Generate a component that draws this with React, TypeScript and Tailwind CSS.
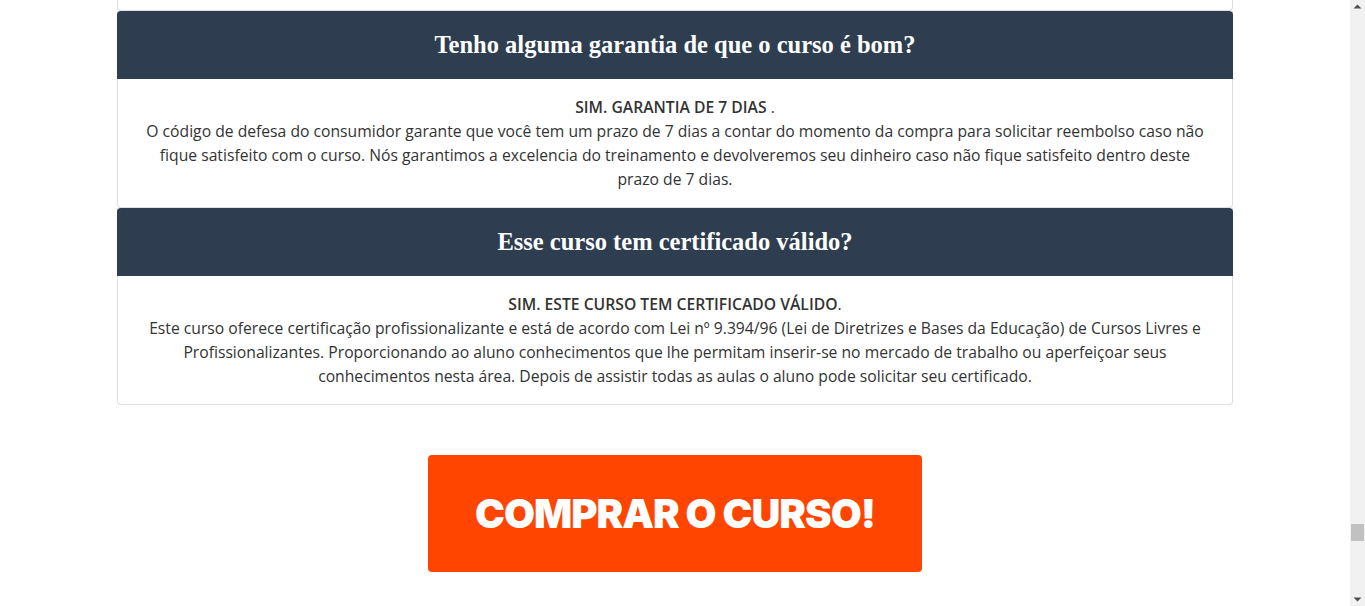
const cards = [
  {
    title: "Tenho alguma garantia de que o curso é bom?",
    lead: "SIM. GARANTIA DE 7 DIAS",
    leadTail: " .",
    text: "O código de defesa do consumidor garante que você tem um prazo de 7 dias a contar do momento da compra para solicitar reembolso caso não fique satisfeito com o curso. Nós garantimos a excelencia do treinamento e devolveremos seu dinheiro caso não fique satisfeito dentro deste prazo de 7 dias.",
  },
  {
    title: "Esse curso tem certificado válido?",
    lead: "SIM. ESTE CURSO TEM CERTIFICADO VÁLIDO",
    leadTail: ".",
    text: "Este curso oferece certificação profissionalizante e está de acordo com Lei nº 9.394/96 (Lei de Diretrizes e Bases da Educação) de Cursos Livres e Profissionalizantes. Proporcionando ao aluno conhecimentos que lhe permitam inserir-se no mercado de trabalho ou aperfeiçoar seus conhecimentos nesta área. Depois de assistir todas as aulas o aluno pode solicitar seu certificado.",
  },
];

function FaqCard({ title, lead, leadTail, text }: (typeof cards)[number]) {
  return (
    <div className="border-x border-b border-[#dedede] rounded-b">
      <div className="-mx-px h-[68px] rounded-t bg-[#2e3e50] flex items-center justify-center">
        <h3 className="text-white text-[24.5px] font-bold font-['Liberation_Serif',serif]">{title}</h3>
      </div>
      <div className="px-5 py-4 text-center text-[15.7px] leading-6 text-[#333]">
        <p>
          <strong className="font-semibold">{lead}</strong>
          {leadTail}
        </p>
        <p>{text}</p>
      </div>
    </div>
  );
}

// static stand-in for the browser scrollbar seen in the screenshot
function Scrollbar() {
  return (
    <div className="w-[15px] h-full bg-[#f1f1f1] flex flex-col items-center shrink-0">
      <svg width="15" height="15" viewBox="0 0 15 15" className="shrink-0">
        <path d="M3.5 8.5 L7.5 4.5 L11.5 8.5 Z" fill="#505050" />
      </svg>
      <div className="flex-1" />
      <div className="w-[13px] h-[17px] bg-[#c1c1c1] shrink-0" />
      <div className="h-[50px] shrink-0" />
      <svg width="15" height="15" viewBox="0 0 15 15" className="shrink-0">
        <path d="M3.5 6.5 L7.5 10.5 L11.5 6.5 Z" fill="#505050" />
      </svg>
    </div>
  );
}

export default function App() {
  return (
    <div className="flex h-[606px] overflow-hidden bg-white font-['Open_Sans',sans-serif]">
      <div className="flex-1 min-w-0">
        <div className="max-w-[1140px] mx-auto px-3">
          <div className="h-[11px] border-x border-b border-[#dedede] rounded-b" />
          {cards.map((c) => (
            <FaqCard key={c.title} {...c} />
          ))}
          <div className="flex justify-center pt-[50px] pb-[60px]">
            <a
              href="#"
              className="w-[494px] h-[117px] rounded bg-[#ff4500] flex items-center justify-center text-white text-[40px] font-black tracking-tight font-['Inter',sans-serif]"
            >
              COMPRAR O CURSO!
            </a>
          </div>
        </div>
      </div>
      <Scrollbar />
    </div>
  );
}
